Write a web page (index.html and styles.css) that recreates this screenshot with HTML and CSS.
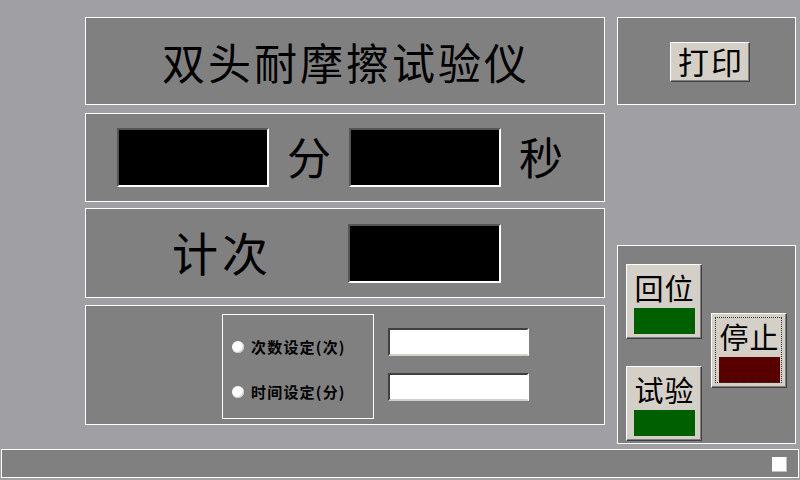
FILE: index.html
```html
<!DOCTYPE html>
<html lang="zh-CN">
<head>
<meta charset="utf-8">
<title>双头耐摩擦试验仪</title>
<link rel="stylesheet" href="styles.css">
</head>
<body>
<div class="screen">
  <div class="main">
    <div class="left">
      <div class="panel p-title"><span class="title">双头耐摩擦试验仪</span></div>
      <div class="panel p-time">
        <div class="lcd"></div>
        <span class="unit">分</span>
        <div class="lcd"></div>
        <span class="unit">秒</span>
      </div>
      <div class="panel p-count">
        <span class="count-label">计次</span>
        <div class="lcd"></div>
      </div>
      <div class="panel p-set">
        <div class="group">
          <div class="opt"><span class="radio"></span><span class="opt-text">次数设定(次)</span></div>
          <div class="opt"><span class="radio"></span><span class="opt-text">时间设定(分)</span></div>
        </div>
        <div class="inputs">
          <div class="field"></div>
          <div class="field"></div>
        </div>
      </div>
    </div>
    <div class="right">
      <div class="panel p-print">
        <div class="btn print">打印</div>
      </div>
      <div class="panel p-ctrl">
        <div class="col">
          <div class="btn big"><span class="btn-text">回位</span><span class="lamp green"></span></div>
          <div class="btn big"><span class="btn-text">试验</span><span class="lamp green"></span></div>
        </div>
        <div class="col col-stop">
          <div class="btn big focus"><span class="btn-text">停止</span><span class="lamp red"></span></div>
        </div>
      </div>
    </div>
  </div>
  <div class="statusbar"><span class="check"></span></div>
</div>
</body>
</html>
```
FILE: styles.css
```css
* { box-sizing: border-box; }
html, body {
  margin: 0;
  padding: 0;
  width: 800px;
  height: 480px;
  overflow: hidden;
  background: #a0a0a4;
  font-family: "Noto Sans CJK SC", "Noto Sans", sans-serif;
  color: #000;
}
.screen { width: 800px; height: 480px; }
.main {
  display: flex;
  gap: 12px;
  padding: 17px 0 0 85px;
  height: 444px;
}
.panel {
  background: #808080;
  border: 1px solid #fff;
}
.left {
  width: 520px;
  display: flex;
  flex-direction: column;
}
.p-title {
  height: 88px;
  display: flex;
  align-items: center;
  justify-content: center;
}
.title {
  font-size: 43px;
  letter-spacing: 3px;
  line-height: 1;
  margin-left: 2px;
}
.p-time {
  margin-top: 8px;
  height: 89px;
  display: flex;
  align-items: center;
  padding-left: 31px;
}
.lcd {
  width: 152px;
  height: 59px;
  background: #000;
  border-top: 2px solid #555;
  border-left: 2px solid #555;
  border-bottom: 2px solid #fff;
  border-right: 2px solid #fff;
}
.unit {
  width: 80px;
  text-align: center;
  font-size: 44px;
  line-height: 1;
  margin-top: -4px;
}
.p-count {
  margin-top: 6px;
  height: 90px;
  display: flex;
  align-items: center;
  padding-left: 86px;
}
.count-label {
  width: 176px;
  font-size: 46px;
  letter-spacing: 4px;
  line-height: 1;
  margin-top: -4px;
}
.p-count .lcd { width: 153px; }
.p-set {
  margin-top: 7px;
  height: 120px;
  display: flex;
  padding: 8px 0 0 136px;
}
.group {
  width: 152px;
  height: 105px;
  border: 1px solid #fff;
  padding: 21px 0 0 9px;
  display: flex;
  flex-direction: column;
  gap: 25px;
}
.opt {
  display: flex;
  align-items: center;
  height: 20px;
}
.radio {
  width: 12px;
  height: 12px;
  border-radius: 50%;
  background: #fff;
  box-shadow: inset -1px -1px 1px #c8c8c8;
  margin-right: 7px;
  margin-top: 2px;
}
.opt-text {
  font-size: 15px;
  font-weight: bold;
  letter-spacing: 1.2px;
  color: #000;
}
.inputs {
  margin: 14px 0 0 14px;
  display: flex;
  flex-direction: column;
  gap: 17px;
}
.field {
  width: 141px;
  height: 28px;
  background: #fff;
  border-top: 2px solid #404040;
  border-left: 2px solid #404040;
  border-bottom: 2px solid #d4d0c8;
  border-right: 2px solid #fff;
}
.right {
  width: 179px;
  display: flex;
  flex-direction: column;
  justify-content: space-between;
}
.p-print {
  height: 88px;
  padding: 24px 0 0 52px;
}
.btn {
  background: #d4d0c8;
  border-top: 1px solid #fff;
  border-left: 1px solid #fff;
  border-right: 1px solid #404040;
  border-bottom: 1px solid #404040;
  box-shadow: inset -1px -1px 0 #808080;
}
.print {
  width: 80px;
  height: 40px;
  font-size: 31px;
  line-height: 36px;
  text-align: center;
  letter-spacing: 2px;
  padding-left: 2px;
}
.p-ctrl {
  height: 199px;
  display: flex;
  align-items: flex-start;
  gap: 9px;
  padding: 18px 0 0 8px;
}
.col {
  display: flex;
  flex-direction: column;
  gap: 27px;
}
.col-stop { margin-top: 49px; }
.big {
  width: 76px;
  height: 75px;
  display: flex;
  flex-direction: column;
  align-items: center;
  padding-top: 3px;
  position: relative;
}
.btn-text {
  font-size: 29px;
  line-height: 38px;
  letter-spacing: 1px;
  padding-left: 1px;
}
.lamp {
  width: 61px;
  height: 26px;
  margin-top: 2px;
  margin-left: 1px;
}
.green { background: #006000; }
.red { background: #580000; }
.focus::after {
  content: "";
  position: absolute;
  left: 3px;
  top: 3px;
  right: 4px;
  bottom: 4px;
  border: 1px dotted #303030;
  pointer-events: none;
}
.statusbar {
  margin: 5px 0 0 1px;
  width: 798px;
  height: 29px;
  background: #808080;
  border: 1px solid #fff;
  display: flex;
  align-items: center;
  justify-content: flex-end;
  padding-right: 11px;
}
.check {
  width: 15px;
  height: 15px;
  background: #fff;
  border-right: 1px solid #c0c0c0;
  border-bottom: 1px solid #c0c0c0;
  margin-top: 2px;
}
```
